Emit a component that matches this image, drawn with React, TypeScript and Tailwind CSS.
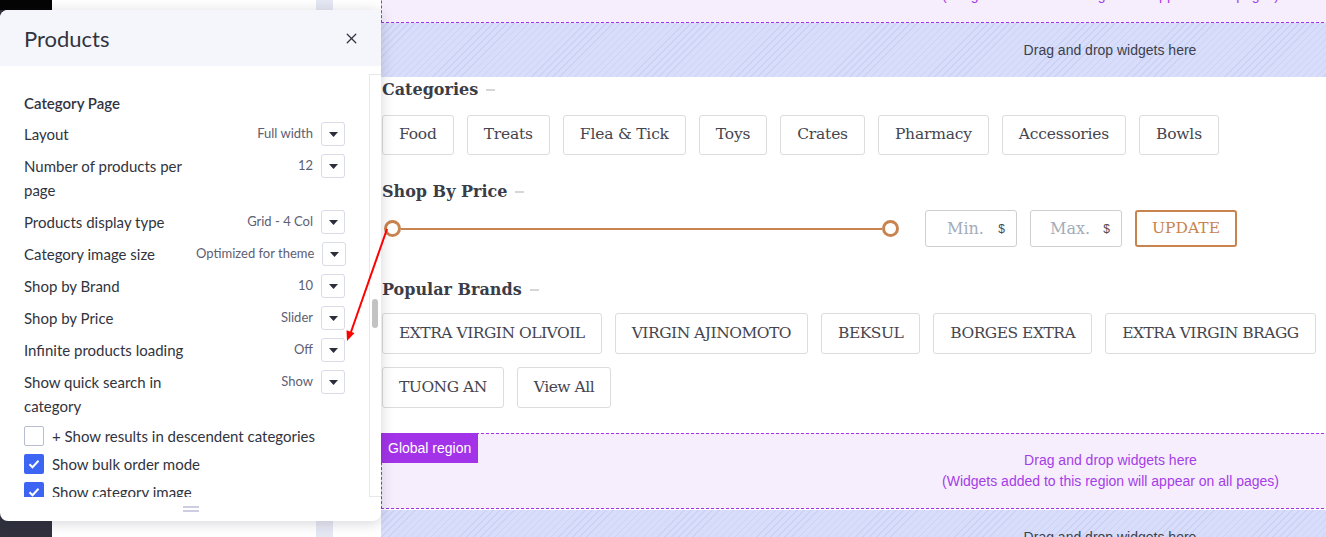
import { X } from "lucide-react";

const settings = [
  { label: "Layout", value: "Full width" },
  { label: "Number of products per page", value: "12" },
  { label: "Products display type", value: "Grid - 4 Col" },
  { label: "Category image size", value: "Optimized for theme" },
  { label: "Shop by Brand", value: "10" },
  { label: "Shop by Price", value: "Slider" },
  { label: "Infinite products loading", value: "Off" },
  { label: "Show quick search in category", value: "Show" },
];

const checks = [
  { label: "+ Show results in descendent categories", on: false },
  { label: "Show bulk order mode", on: true },
  { label: "Show category image", on: true },
];

const categories = ["Food", "Treats", "Flea & Tick", "Toys", "Crates", "Pharmacy", "Accessories", "Bowls"];
const brands = ["EXTRA VIRGIN OLIVOIL", "VIRGIN AJINOMOTO", "BEKSUL", "BORGES EXTRA", "EXTRA VIRGIN BRAGG", "TUONG AN", "View All"];

const Caret = () => (
  <div className="w-6 h-6 shrink-0 border border-[#d9dbe7] rounded-[3px] bg-white flex items-center justify-center">
    <svg width="9" height="5" viewBox="0 0 9 5">
      <path d="M0 0h9L4.5 5z" fill="#2b2e3a" />
    </svg>
  </div>
);

const Check = ({ on }: { on: boolean }) =>
  on ? (
    <div className="w-5 h-5 shrink-0 rounded-[2px] bg-[#3d65f4] flex items-center justify-center">
      <svg width="12" height="10" viewBox="0 0 12 10">
        <path d="M1.5 5.2l3 3L10.5 1.8" fill="none" stroke="white" strokeWidth="2" />
      </svg>
    </div>
  ) : (
    <div className="w-5 h-5 shrink-0 rounded-[2px] border border-[#b9bdd3] bg-white" />
  );

const Heading = ({ children }: { children: string }) => (
  <div className="flex items-center h-6 pt-[1px]">
    <h3 className="text-[16px] font-bold text-[#3a3d48] font-['DejaVu_Serif',serif]">{children}</h3>
    <span className="ml-[8px] w-[9px] h-[2px] bg-[#d6d6d6]" />
  </div>
);

const Chip = ({ text, className }: { text: string; className: string }) => (
  <div className={`px-4 border border-[#dcdcdc] rounded-[3px] flex items-center text-[#45454f] bg-white ${className}`}>
    {text}
  </div>
);

const GlobalRegion = ({ className = "", badge = false }: { className?: string; badge?: boolean }) => (
  <div
    className={`relative h-[76px] shrink-0 border-y border-l border-dashed border-[#a333e8] bg-[#f6eefd] flex flex-col items-center pt-[16px] text-[14px] leading-[21px] text-[#a53de6] ${className}`}
  >
    {badge && (
      <div className="absolute left-[-1px] top-[-1px] h-[30px] px-[7px] bg-[#a333e8] text-white flex items-center">
        Global region
      </div>
    )}
    <span>Drag and drop widgets here</span>
    <span>(Widgets added to this region will appear on all pages)</span>
  </div>
);

const Hatched = () => (
  <div className="h-[54px] shrink-0 flex items-center justify-center text-[14px] text-[#3d3f4c] bg-[repeating-linear-gradient(135deg,#d7ddfa_0px,#d7ddfa_4px,#cbd2f3_4px,#cbd2f3_5px)]">
    Drag and drop widgets here
  </div>
);

export default function App() {
  return (
    <div className="relative w-[1326px] h-[537px] overflow-hidden bg-white flex">
      {/* page behind the drawer */}
      <div className="w-[381px] shrink-0 flex">
        <div className="w-[52px] bg-[#30313d] flex flex-col">
          <div className="h-[10px] w-[55px] bg-[#050505]" />
        </div>
        <div className="w-[264px] bg-white" />
        <div className="w-[17px] bg-[#e5e7f3]" />
        <div className="flex-1 bg-white" />
      </div>

      {/* canvas */}
      <div className="flex-1 overflow-hidden">
        <div className="w-[1458px] flex flex-col font-['Liberation_Sans',sans-serif]">
          <GlobalRegion className="-mt-[53px]" />
          <Hatched />

          <section className="w-[1000px] pl-[1px] font-['DejaVu_Serif',serif]">
            <Heading>Categories</Heading>
            <div className="mt-[14px] flex gap-[13px]">
              {categories.map((c) => (
                <Chip key={c} text={c} className="h-[40px] text-[15.5px] tracking-[-0.2px]" />
              ))}
            </div>

            <div className="mt-[24px]">
              <Heading>Shop By Price</Heading>
            </div>
            <div className="mt-[7px] flex items-center">
              <div className="ml-[2px] w-[515px] flex items-center">
                <div className="w-[17px] h-[17px] rounded-full border-[3px] border-[#c8834e] bg-white" />
                <div className="flex-1 h-[2px] bg-[#c8834e]" />
                <div className="w-[17px] h-[17px] rounded-full border-[3px] border-[#c8834e] bg-white" />
              </div>
              <div className="ml-[26px] w-[92px] h-[37px] border border-[#cfcfcf] rounded-[3px] flex items-center">
                <span className="pl-[21px] text-[16px] text-[#a4acba]">Min.</span>
                <span className="ml-auto mr-[11px] text-[12px] text-[#4b4b55] font-['Liberation_Sans',sans-serif]">$</span>
              </div>
              <div className="ml-[13px] w-[92px] h-[37px] border border-[#cfcfcf] rounded-[3px] flex items-center">
                <span className="pl-[19px] text-[16px] text-[#a4acba]">Max.</span>
                <span className="ml-auto mr-[11px] text-[12px] text-[#4b4b55] font-['Liberation_Sans',sans-serif]">$</span>
              </div>
              <div className="ml-[13px] w-[102px] h-[37px] border-2 border-[#c8834e] rounded-[3px] flex items-center justify-center text-[15.5px] text-[#c8834e]">
                UPDATE
              </div>
            </div>

            <div className="mt-[30px]">
              <Heading>Popular Brands</Heading>
            </div>
            <div className="mt-[12px] flex flex-wrap gap-[13px]">
              {brands.map((b) => (
                <Chip key={b} text={b} className="h-[41px] text-[15.5px] tracking-[-0.5px]" />
              ))}
            </div>
          </section>

          <GlobalRegion className="mt-[25px]" badge />
          <div className="h-[1px]" />
          <Hatched />
        </div>
      </div>

      {/* settings drawer */}
      <div className="absolute left-0 top-[10px] w-[381px] h-[511px] bg-white rounded-[8px] shadow-[0_2px_14px_rgba(20,24,50,0.18)] flex flex-col overflow-hidden font-['Lato',sans-serif] text-[#313440]">
        <div className="h-[56px] shrink-0 bg-[#f5f6fb] flex items-center justify-between pl-[24px] pr-[21px]">
          <span className="text-[22px]">Products</span>
          <X size={17} strokeWidth={1.75} className="text-[#313440]" />
        </div>
        <div className="h-[8px] shrink-0" />
        <div className="h-[423px] shrink-0 flex">
          <div className="flex-1 overflow-hidden px-[24px] pt-[17px] text-[15px]">
            <div className="leading-6 font-semibold mb-[3px]">Category Page</div>
            {settings.map((s) => (
              <div key={s.label} className="flex items-start py-1">
                <div className="w-[172px] shrink-0 leading-6">{s.label}</div>
                <div className="ml-auto h-6 flex items-center gap-2 whitespace-nowrap">
                  <span className="text-[13px] text-[#5d6072]">{s.value}</span>
                  <Caret />
                </div>
              </div>
            ))}
            {checks.map((c) => (
              <div key={c.label} className="h-[28px] flex items-center gap-2 whitespace-nowrap">
                <Check on={c.on} />
                <span>{c.label}</span>
              </div>
            ))}
          </div>
          <div className="w-[12px] relative border border-r-0 border-[#e8e8ec]">
            <div className="absolute left-[2px] top-[224px] w-[6px] h-[29px] rounded-full bg-[#c3c3c3]" />
          </div>
        </div>
        <div className="flex-1 flex flex-col items-center justify-center gap-[2px]">
          <div className="w-[16px] h-[2px] bg-[#cbcee0]" />
          <div className="w-[16px] h-[2px] bg-[#cbcee0]" />
        </div>
      </div>

      {/* annotation arrow */}
      <svg className="absolute left-0 top-0 pointer-events-none" width="1326" height="537">
        <line x1="387" y1="229" x2="351" y2="332" stroke="#ff0000" strokeWidth="2" />
        <polygon points="347,341 354.5,333 346.5,330.3" fill="#ff0000" />
      </svg>
    </div>
  );
}
